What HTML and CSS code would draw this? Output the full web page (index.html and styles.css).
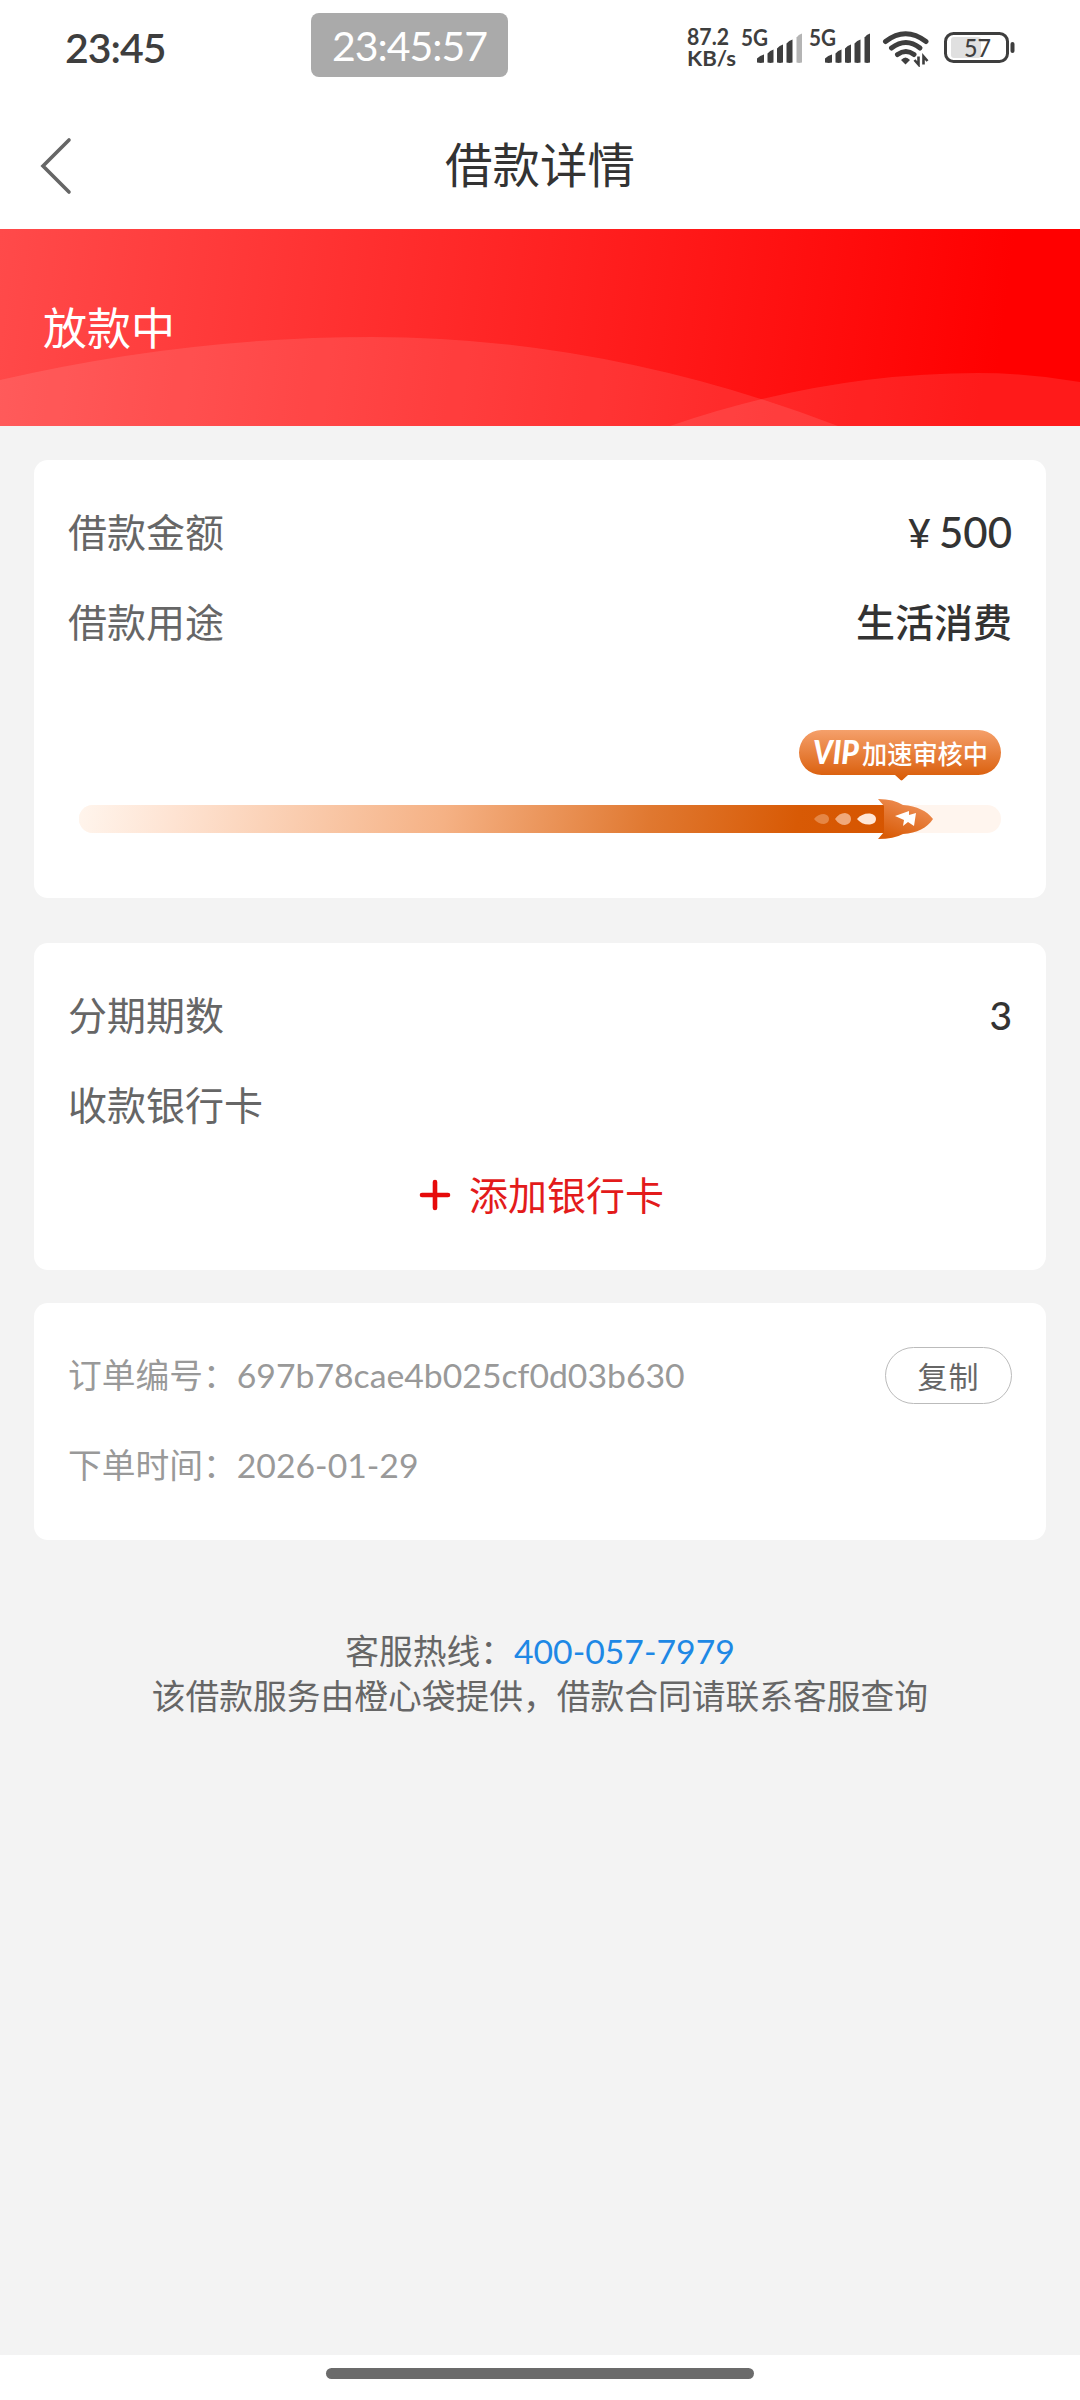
FILE: index.html
```html
<!DOCTYPE html>
<html lang="zh-CN">
<head>
<meta charset="utf-8">
<title>借款详情</title>
<link rel="stylesheet" href="styles.css">
</head>
<body>
<div class="screen">
  <div class="status">
    <span class="clock">23:45</span>
    <span class="timer">23:45:57</span>
    <svg class="status-icons" width="330" height="40" viewBox="685 27 330 40">
      <g class="net">
        <text x="687" y="45" font-size="22" textLength="42" lengthAdjust="spacingAndGlyphs">87.2</text>
        <text x="687" y="65.500" font-size="21" textLength="49" lengthAdjust="spacingAndGlyphs">KB/s</text>
        <text x="741" y="45.500" font-size="22" textLength="27" lengthAdjust="spacingAndGlyphs">5G</text>
        <text x="809" y="45.500" font-size="22" textLength="27" lengthAdjust="spacingAndGlyphs">5G</text>
      </g>
      <defs>
        <g id="bars">
          <path d="M0 62.500v-4q3-3 7-4v8q-3 .8-7 0z"/>
          <path d="M10.500 62.500v-9q2.500-3 6-4v13q-3 .8-6 0z"/>
          <path d="M20 62.500v-14q2.500-3 6-4v18q-3 .8-6 0z"/>
          <path d="M29.500 62.500v-19q2.500-3 6-4v23q-3 .8-6 0z"/>
        </g>
        <path id="bar5" d="M39.500 62.500v-25q2-3 5.500-4v29q-3 .8-5.500 0z"/>
      </defs>
      <g fill="#3e3e3e">
        <use href="#bars" x="757"/><use href="#bar5" x="757" fill="#b4b4b4"/>
        <use href="#bars" x="825"/><use href="#bar5" x="825"/>
      </g>
      <g fill="none" stroke="#3e3e3e" stroke-width="5" stroke-linecap="round">
        <path d="M885.500 41.500q20-15.500 40.500 0"/>
        <path d="M891.500 48q14.500-11 28.500 0"/>
        <path d="M897.500 54.500q8.500-6 16.500 0"/>
      </g>
      <path d="M905.500 64.500l-4.500-4.500q4.500-5 9 0z" fill="#3e3e3e"/>
      <path d="M918.500 56.500v8l-4-4.500M923.500 64.500v-8l4 4.500" fill="none" stroke="#3e3e3e" stroke-width="2.600"/>
      <rect x="951" y="37" width="30" height="21" rx="3" fill="#e0e0e0"/>
      <rect x="945.500" y="33.500" width="62" height="28" rx="8" fill="none" stroke="#3e3e3e" stroke-width="3"/>
      <rect x="1010.500" y="42" width="4" height="11" rx="2" fill="#3e3e3e"/>
      <text class="level" x="964" y="56.500" font-size="25" textLength="27" lengthAdjust="spacingAndGlyphs">57</text>
    </svg>
  </div>

  <header class="nav">
    <svg class="back" width="36" height="60" viewBox="0 0 36 60"><path d="M31 4L5 30l26 26" fill="none" stroke="#666" stroke-width="3.600" stroke-linecap="round"/></svg>
    <h1>借款详情</h1>
  </header>

  <section class="banner">
    <svg class="waves" viewBox="0 0 1080 197">
      <path d="M0 151Q186 108 372 108Q605 108 838 197H0z"/>
      <path d="M670 197Q824 144 978 144Q1029 144 1080 153V197z"/>
    </svg>
    <span class="state">放款中</span>
  </section>

  <main>
    <section class="card loan">
      <div class="row"><span>借款金额</span><span class="value amount"><i>¥</i>500</span></div>
      <div class="row"><span>借款用途</span><span class="value">生活消费</span></div>
      <svg class="progress" width="944" height="120" viewBox="68 725 944 120">
        <defs>
          <linearGradient id="fill" gradientUnits="userSpaceOnUse" x1="80" y1="790" x2="880" y2="920">
            <stop offset="0" stop-color="#fff5ed"/><stop offset=".12" stop-color="#fee3d2"/><stop offset=".45" stop-color="#f5b184"/><stop offset=".7" stop-color="#e07830"/><stop offset=".88" stop-color="#d85a05"/><stop offset="1" stop-color="#d65500"/>
          </linearGradient>
          <linearGradient id="tag" x1="0" y1="0" x2="0" y2="1"><stop offset="0" stop-color="#f5a06b"/><stop offset="1" stop-color="#d85a05"/></linearGradient>
          <linearGradient id="ship" x1="0.800" y1="0" x2="0.300" y2="1"><stop offset="0" stop-color="#f1955f"/><stop offset="1" stop-color="#d95c08"/></linearGradient>
        </defs>
        <rect x="79" y="805" width="922" height="28" rx="14" fill="#fff5ee"/>
        <path d="M93 805H885V833H93a14 14 0 0 1 0-28z" fill="url(#fill)"/>
        <path d="M814 819q4-5 10-5q5 1 5 5t-5 5q-6 0-10-5z" fill="#e58645"/>
        <path d="M835 819q4-6 10-6q6 1 6 6t-6 6q-6 0-10-6z" fill="#f0a97b"/>
        <path d="M857 819q5-6 13-5.500q6 1 6 5.500t-6 5.500q-8 .5-13-5.500z" fill="#ffe7d8"/>
        <path d="M878 799q16 0 25 6c14 1 24 6 30 14c-6 9-16 14-30 15q-9 5-25 5l6-7v-26z" fill="url(#ship)"/>
        <path d="M895 816l14-5v4l7-2-2 13-6-4-5 4 1-6z" fill="#fff"/>
        <path d="M821.500 730H978.500a22.500 22.500 0 0 1 0 45H908l-5.500 5q-1 .8-2 0l-5.500-5H821.500a22.500 22.500 0 0 1 0-45z" fill="url(#tag)"/>
        <text class="vip" x="813" y="764" textLength="46" lengthAdjust="spacingAndGlyphs">VIP</text>
        <text class="tip" x="862" y="763.500" textLength="126" lengthAdjust="spacingAndGlyphs">加速审核中</text>
      </svg>
    </section>

    <section class="card bank">
      <div class="row"><span>分期期数</span><span class="value">3</span></div>
      <div class="row"><span>收款银行卡</span></div>
      <div class="row add">
        <svg width="32" height="32" viewBox="0 0 32 32"><path d="M16 3v26M3 16h26" stroke="#e60a0a" stroke-width="4.600" stroke-linecap="round"/></svg>
        <span>添加银行卡</span>
      </div>
    </section>

    <section class="card order">
      <div class="row"><span>订单编号：<b class="code">697b78cae4b025cf0d03b630</b></span><button class="copy">复制</button></div>
      <div class="row"><span>下单时间：<b class="date">2026<u>-</u>01<u>-</u>29</b></span></div>
    </section>

    <footer>
      <p>客服热线：<a class="phone">400<u>-</u>057<u>-</u>7979</a></p>
      <p>该借款服务由橙心袋提供，借款合同请联系客服查询</p>
    </footer>
  </main>

  <div class="home"><div class="indicator"></div></div>
</div>
</body>
</html>
```
FILE: styles.css
```css
* { box-sizing: border-box; margin: 0; padding: 0; }
body { background: #f3f3f3; font-family: Lato, "Noto Sans CJK SC", sans-serif; color: #666; }
.screen { width: 1080px; height: 2400px; display: flex; flex-direction: column; overflow: hidden; }
svg { display: block; }
i, b, u { font-style: normal; font-weight: inherit; text-decoration: none; }

.status { height: 100px; background: #fff; display: flex; align-items: flex-start; padding: 0 65px; }
.clock { width: 246px; padding-top: 23px; font-size: 41px; line-height: 50px; font-weight: 600; letter-spacing: -1px; color: #3e3e3e; }
.timer { width: 197px; height: 64px; margin-top: 13px; border-radius: 8px; background: #aaa; color: #fff; font-size: 41px; line-height: 66px; text-align: center; letter-spacing: -1px; }
.status-icons { margin: 27px 0 0 177px; flex: none; }
.net text { font-family: Lato, sans-serif; font-weight: 700; fill: #3e3e3e; }
.level { font-family: Lato, sans-serif; font-weight: 500; fill: #3e3e3e; }

.nav { height: 129px; background: #fff; display: grid; grid-template-columns: 76px 1fr 76px; align-items: center; padding: 0 0 0; }
.back { margin-left: 38px; margin-top: 3px; }
.nav h1 { text-align: center; font-size: 47.500px; line-height: 70px; font-weight: 400; color: #333; }

.banner { height: 197px; position: relative; display: flex; align-items: center; padding-left: 43px; background: linear-gradient(97deg, #ff4a4a 0%, #ff2626 45%, #ff0000 92%); }
.waves { position: absolute; inset: 0; width: 1080px; height: 197px; fill: rgba(255,255,255,.1); }
.state { position: relative; color: #fff; font-size: 44px; line-height: 64px; }

main { flex: 1; padding: 34px 34px 0; }
.card { background: #fff; border-radius: 14px; padding: 27px 34px 0; }
.loan { height: 438px; }
.bank { height: 327px; margin-top: 45px; }
.order { height: 237px; margin-top: 33px; }
.row { height: 90px; display: flex; align-items: center; justify-content: space-between; font-size: 39px; line-height: 56px; white-space: nowrap; }
.value { color: #333; font-weight: 500; }
.amount { font-size: 42px; }
.amount i { font-size: 40px; margin-right: 8px; }
.value { letter-spacing: 0; }
.progress { margin-top: 58px; }
.vip { font: italic 900 32px Lato, sans-serif; fill: #fff; }
.tip { font: 500 26px "Noto Sans CJK SC", sans-serif; fill: #fff; }
.add { justify-content: center; gap: 18px; color: #e31b1b; padding-left: 3px; }
.order .row { font-size: 33.750px; line-height: 48px; color: #999; }
.copy { width: 127px; height: 57px; border: 1px solid #bbb; border-radius: 29px; background: #fff; font: 30px/53px "Noto Sans CJK SC", sans-serif; letter-spacing: 1px; color: #666; }

footer { padding-top: 89px; text-align: center; font-size: 33.750px; line-height: 45px; white-space: nowrap; }
footer p { height: 45px; }
.phone { color: #1e88e5; }

.home { height: 45px; background: #fff; display: flex; justify-content: center; padding-top: 13px; }
.indicator { width: 428px; height: 11px; border-radius: 6px; background: #6b6b6b; }
```
